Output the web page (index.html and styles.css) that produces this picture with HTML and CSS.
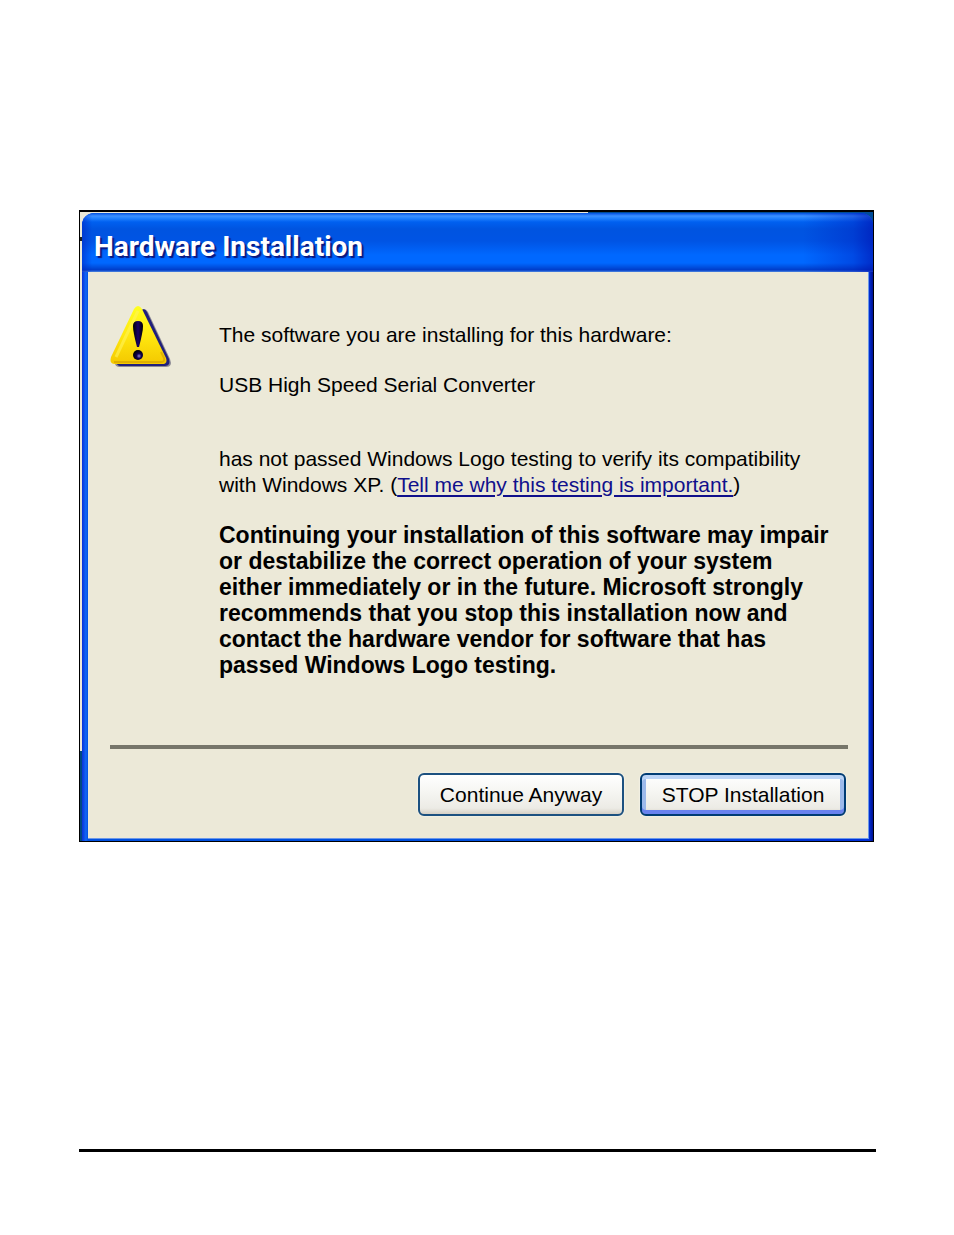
FILE: index.html
```html
<!DOCTYPE html>
<html lang="en">
<head>
    <meta charset="UTF-8">
    <meta name="viewport" content="width=device-width, initial-scale=1.0">
    <title>Hardware Installation</title>
    <link rel="stylesheet" href="styles.css">
</head>
<body>
    <main class="page">
        <div class="figure">
            <section class="window" role="dialog" aria-labelledby="window-title">
                <header class="title-bar">
                    <h1 id="window-title">Hardware Installation</h1>
                </header>
                <div class="window-body">
                    <div class="content">
                        <svg class="warning-icon" viewBox="0 0 64 64" aria-hidden="true">
                            <defs>
                                <linearGradient id="yellow" x1="0" y1="0" x2="0" y2="1">
                                    <stop offset="0" stop-color="#ffff20"/>
                                    <stop offset="0.5" stop-color="#ffe810"/>
                                    <stop offset="1" stop-color="#f4c800"/>
                                </linearGradient>
                                <radialGradient id="dot" cx="0.6" cy="0.6" r="0.6">
                                    <stop offset="0" stop-color="#9080d0"/>
                                    <stop offset="0.4" stop-color="#100050"/>
                                    <stop offset="1" stop-color="#000000"/>
                                </radialGradient>
                                <linearGradient id="mark" x1="0" y1="0" x2="1" y2="0">
                                    <stop offset="0" stop-color="#000000"/>
                                    <stop offset="0.5" stop-color="#180068"/>
                                    <stop offset="1" stop-color="#000000"/>
                                </linearGradient>
                            </defs>
                            <path d="M31 4 Q35 1 38 6 L60 53 Q63 61 56 61 H10 Q5 61 5 57Z" fill="#8c8a94"/>
                            <path d="M32 4 Q35 2 37 6 L59 53 Q61 60 55 60 H10 Q6 59 7 56Z" fill="#20207c"/>
                            <path d="M24 3 Q28 -3 32 3 L56 52 Q58 58 52 58 H5 Q-1 58 1 51Z" fill="url(#yellow)"/>
                            <path d="M28 5 L6 51" fill="none" stroke="#fff45c" stroke-width="3" opacity="0.6"/>
                            <path d="M4 56 H51 Q55 56 54 52 L51 46" fill="none" stroke="#d09c00" stroke-width="2" opacity="0.6"/>
                            <path d="M23 20 Q23 15 28 15 Q33 15 33 20 Q33 26 29 41 H27 Q23 26 23 20Z" fill="url(#mark)"/>
                            <circle cx="28" cy="49" r="5" fill="url(#dot)"/>
                        </svg>
                        <div class="message">
                            <p>The software you are installing for this hardware:</p>
                            <p class="device">USB High Speed Serial Converter</p>
                            <p>has not passed Windows Logo testing to verify its compatibility<br>
                            with Windows XP. (<a href="#">Tell me why this testing is important.</a>)</p>
                            <p class="warning">Continuing your installation of this software may impair<br>
                            or destabilize the correct operation of your system<br>
                            either immediately or in the future. Microsoft strongly<br>
                            recommends that you stop this installation now and<br>
                            contact the hardware vendor for software that has<br>
                            passed Windows Logo testing.</p>
                        </div>
                    </div>
                    <div class="buttons">
                        <button type="button">Continue Anyway</button>
                        <button type="button" class="default">STOP Installation</button>
                    </div>
                </div>
            </section>
        </div>
        <hr class="footer-rule">
    </main>
</body>
</html>
```
FILE: styles.css
```css
body {
    margin: 0;
    background: #ffffff;
    color: #000000;
    font-family: "Liberation Sans", Arial, sans-serif;
    font-size: 21px;
    line-height: 26px;
}
.page {
    padding: 210px 78px 80px 79px;
}
.figure {
    margin-right: 2px;
    padding: 1px 0 0 2px;
    border: 1px solid #000000;
    border-top-width: 2px;
    background:
        linear-gradient(#004c98, #004c98) right top / 36% 20px no-repeat,
        linear-gradient(#004a80, #004a80) left bottom / 2px 90px no-repeat,
        linear-gradient(#202020, #202020) left 25px / 2px 4px no-repeat,
        #ece9d8;
}
.window {
    border-radius: 12px 12px 0 0;
    background: linear-gradient(to right, #0831d9, #1168f5 4px, #0050e0 6px, #0050e0 50%, #0030d8 calc(100% - 4px), #001090);
    overflow: hidden;
}
.title-bar {
    display: flex;
    align-items: center;
    height: 59px;
    padding: 0 12px;
    box-sizing: border-box;
    background:
        linear-gradient(to right, rgba(0, 40, 200, 0.6), transparent 10px),
        linear-gradient(to left, rgba(0, 20, 180, 0.7), rgba(0, 30, 190, 0.4) 20px, transparent 70px),
        linear-gradient(#0050e0 0, #3c90ff 3px, #2484ff 5px, #0060f0 9px, #0054e0 16px, #0054e4 28px, #0068ff 42px, #0068ff 50px, #0050e0 54px, #003cc8 57px, #5088e0 59px);
}
h1 {
    margin: 0;
    padding-top: 8px;
    color: #ffffff;
    font-family: Roboto, "Liberation Sans", sans-serif;
    font-size: 28px;
    font-weight: 700;
    line-height: 30px;
    text-shadow: 2px 2px 1px #0a1880;
}
.window-body {
    margin: 0 4px 2px 6px;
    padding: 34px 20px 22px 22px;
    border: 1px solid #6c98e8;
    border-width: 0 1px 1px 0;
    background: #ece9d8;
}
.content {
    display: flex;
    gap: 45px;
    padding-bottom: 67px;
    border-bottom: 4px solid #77766a;
}
.warning-icon {
    flex: none;
    width: 64px;
    height: 64px;
}
.message {
    padding-top: 16px;
}
.message p {
    margin: 0 0 24px;
}
.message .device {
    margin-bottom: 48px;
}
.message .warning {
    margin-bottom: 0;
    font-weight: 700;
    font-size: 23px;
}
a {
    color: #10108c;
    text-decoration: underline;
    text-underline-offset: 3px;
}
.buttons {
    display: flex;
    justify-content: flex-end;
    gap: 16px;
    padding: 24px 2px 0 0;
}
button {
    width: 206px;
    height: 43px;
    padding: 1px 0 0;
    border: 2px solid #1c5180;
    border-radius: 6px;
    background: linear-gradient(#ffffff, #f4f4f0 50%, #ecebe5 85%, #d6d0c5);
    box-shadow: 0 0 2px #ffffff;
    color: #000000;
    font: inherit;
}
.default {
    border-color: #003c74;
    box-shadow: inset 0 4px 0 #bcd4f6, inset 0 -4px 0 #6982ee, inset 4px 0 0 #9dbaeb, inset -4px 0 0 #9dbaeb, 0 0 2px #ffffff;
}
.footer-rule {
    height: 3px;
    margin: 307px 0 0;
    border: 0;
    background: #000000;
}
```
